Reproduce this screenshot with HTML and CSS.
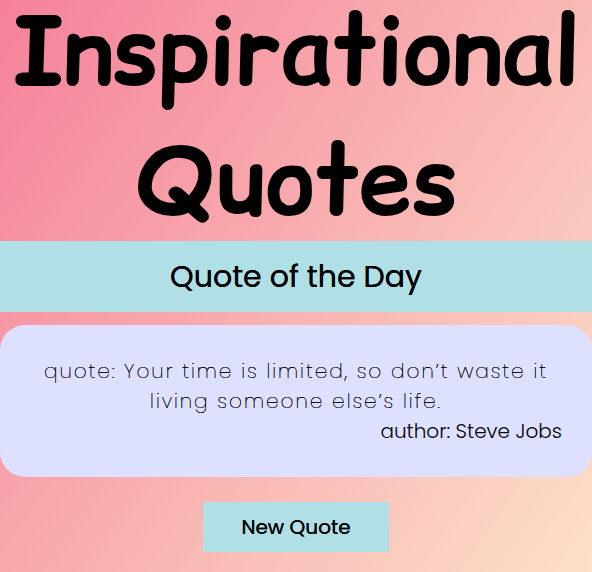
FILE: index.html
```
<!DOCTYPE html>
<html lang="en">
<head>
<meta charset="utf-8">
<meta name="viewport" content="width=device-width, initial-scale=1">
<title>Inspirational Quotes</title>
<link rel="stylesheet" href="styles.css">
</head>
<body>
<main class="page">
<h1 class="title">Inspirational Quotes</h1>
<h2 class="subtitle">Quote of the Day</h2>
<section class="card">
<p class="quote">quote: Your time is limited, so don’t waste it living someone else’s life.</p>
<p class="author">author: Steve Jobs</p>
</section>
<button class="new-quote" type="button">New Quote</button>
</main>
</body>
</html>
```
FILE: styles.css
```
* {
  box-sizing: border-box;
  margin: 0;
}

body {
  min-height: 100vh;
  background: linear-gradient(125deg, #f5819a, #fce0c8);
  color: #000;
  font-family: Poppins, "Open Sans", sans-serif;
}

.page {
  display: flex;
  flex-direction: column;
  align-items: center;
}

.title {
  margin-top: -14px;
  margin-bottom: -5px;
  font-family: "Comic Sans MS", "Comic Relief", "Comic Neue", cursive;
  font-size: 94px;
  font-weight: 700;
  line-height: 130px;
  text-align: center;
}

.subtitle {
  width: 100%;
  padding: 12px;
  background: #b0e0e6;
  font-size: 30px;
  font-weight: 400;
  line-height: 47px;
  text-align: center;
  text-shadow: 0 0 0 #000;
}

.card {
  width: 100%;
  margin-top: 13px;
  padding: 31px 30px;
  border-radius: 25px;
  background: #dde0ff;
  font-size: 20px;
  font-weight: 300;
  line-height: 30px;
}

.quote {
  font-weight: 200;
  letter-spacing: 2px;
  text-align: center;
  text-shadow: 0 0 0 #000, 0 0 0 #000;
}

.author {
  text-align: right;
}

.new-quote {
  margin-top: 25px;
  padding: 10px 38px;
  border: 0;
  background: #b0e0e6;
  color: #000;
  font: inherit;
  font-size: 20px;
  line-height: 30px;
  text-shadow: 0 0 0 #000;
}
```
